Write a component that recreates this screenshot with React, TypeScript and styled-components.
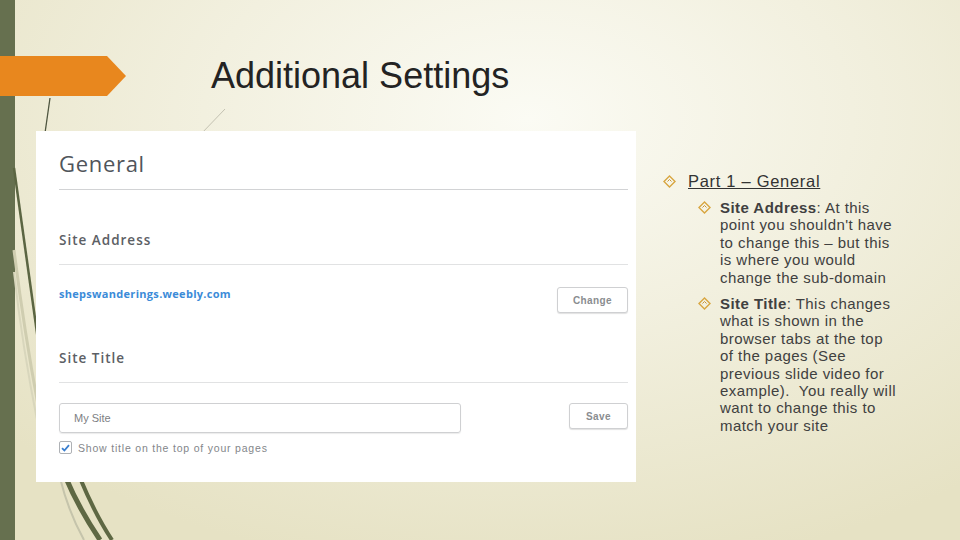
import React from "react";
import styled, { createGlobalStyle } from "styled-components";

const GlobalStyle = createGlobalStyle`
  html, body {
    margin: 0;
    padding: 0;
    background: #e6e2c3;
  }
`;

// Slide frame: green stripe on the left, cream radial wash behind
const Slide = styled.div`
  position: relative;
  width: 960px;
  height: 540px;
  overflow: hidden;
  box-sizing: border-box;
  padding-top: 56px;
  background:
    linear-gradient(to right, #66704f 0, #66704f 15px, transparent 15px),
    radial-gradient(ellipse 75% 85% at 55% 22%, #fbfbf4 0%, #f2f0df 45%, #e6e2c4 100%);
  font-family: "Liberation Sans", Arial, sans-serif;
`;

const Decor = styled.svg`
  position: absolute;
  inset: 0;
  z-index: 0;
  pointer-events: none;
`;

const Header = styled.div`
  position: relative;
  z-index: 1;
  display: flex;
  align-items: center;
  height: 40px;
`;

const Banner = styled.div`
  width: 126px;
  height: 40px;
  background: #e8871e;
  clip-path: polygon(0 0, 107px 0, 126px 50%, 107px 100%, 0 100%);
`;

const Title = styled.h1`
  margin: 0 0 0 85px;
  font-family: "Liberation Sans", Arial, sans-serif;
  font-weight: 400;
  font-size: 36px;
  line-height: 40px;
  color: #232323;
`;

const Content = styled.div`
  position: relative;
  z-index: 1;
  display: flex;
  align-items: flex-start;
  margin-top: 35px;
  padding-left: 36px;
`;

// Screenshot of the settings form
const Panel = styled.div`
  width: 600px;
  height: 351px;
  box-sizing: border-box;
  background: #ffffff;
  padding: 19px 8px 0 23px;
  font-family: "Open Sans", Lato, sans-serif;
`;

const PanelHeading = styled.div`
  font-size: 22px;
  line-height: 27px;
  color: #50555b;
  letter-spacing: 0.7px;
  padding-bottom: 12px;
  border-bottom: 1px solid #d2d3d5;
`;

const SectionLabel = styled.div<{ $gap: number }>`
  margin-top: ${(p) => p.$gap}px;
  font-size: 13.5px;
  line-height: 16px;
  font-weight: 600;
  color: #5c6065;
  letter-spacing: 1px;
  padding-bottom: 16px;
  border-bottom: 1px solid #e1e2e3;
`;

const Row = styled.div<{ $gap: number }>`
  display: flex;
  align-items: flex-start;
  justify-content: space-between;
  margin-top: ${(p) => p.$gap}px;
`;

const Link = styled.span`
  font-size: 11px;
  line-height: 14px;
  font-weight: 700;
  color: #3b8bd8;
  letter-spacing: 0.3px;
`;

const Button = styled.button<{ $width: number }>`
  width: ${(p) => p.$width}px;
  height: 26px;
  box-sizing: border-box;
  border: 1px solid #cfd0d2;
  border-radius: 3px;
  background: #ffffff;
  box-shadow: 0 1px 1px rgba(0, 0, 0, 0.12);
  font-family: "Liberation Sans", Arial, sans-serif;
  font-size: 10px;
  font-weight: 700;
  color: #8a8d90;
  letter-spacing: 0.4px;
  padding: 0;
`;

const TextInput = styled.div`
  width: 402px;
  height: 30px;
  box-sizing: border-box;
  border: 1px solid #cfd0d2;
  border-radius: 3px;
  box-shadow: 0 1px 1px rgba(0, 0, 0, 0.08);
  padding-left: 14px;
  display: flex;
  align-items: center;
  font-family: "Liberation Sans", Arial, sans-serif;
  font-size: 11px;
  color: #7d8083;
`;

const CheckRow = styled.label`
  display: flex;
  align-items: center;
  gap: 6px;
  margin-top: 8px;
  font-family: "Liberation Sans", Arial, sans-serif;
  font-size: 10.5px;
  color: #83868a;
  letter-spacing: 0.8px;
`;

const CheckBox = styled.span`
  width: 13px;
  height: 13px;
  box-sizing: border-box;
  border: 1px solid #aeb1b5;
  border-radius: 2px;
  display: flex;
  align-items: center;
  justify-content: center;
`;

// Bullet notes on the right
const Notes = styled.ul`
  list-style: none;
  margin: 0;
  padding: 40px 0 0 27px;
  color: #3d3d3d;
`;

const Item = styled.li`
  display: flex;
  align-items: flex-start;
  gap: 12px;
`;

const Bullet = styled.span<{ $top: number }>`
  flex: none;
  margin-top: ${(p) => p.$top}px;
  width: 13px;
  height: 13px;
  display: flex;
`;

const Heading = styled.span`
  font-size: 16.5px;
  line-height: 20px;
  letter-spacing: 0.7px;
  text-decoration: underline;
  color: #333333;
`;

const SubList = styled.ul`
  list-style: none;
  margin: 8px 0 0 10px;
  padding: 0;
  display: flex;
  flex-direction: column;
  gap: 9px;
`;

const SubItem = styled.li`
  display: flex;
  align-items: flex-start;
  gap: 9px;
`;

const SubText = styled.span`
  white-space: nowrap;
  font-size: 15px;
  line-height: 17.4px;
  color: #404040;
  letter-spacing: 0.45px;
`;

const Diamond = () => (
  <svg width="13" height="13" viewBox="0 0 13 13">
    <path d="M6.5 1 L12 6.5 L6.5 12 L1 6.5 Z" fill="none" stroke="#d8a640" strokeWidth="1.4" />
    <path d="M4.5 6.5 L6.5 4.5 L8.5 6.5" fill="none" stroke="#c99537" strokeWidth="1" />
  </svg>
);

const siteAddressLines = [
  "point you shouldn't have",
  "to change this – but this",
  "is where you would",
  "change the sub-domain",
];

const siteTitleLines = [
  "what is shown in the",
  "browser tabs at the top",
  "of the pages (See",
  "previous slide video for",
  "example).\u00a0 You really will",
  "want to change this to",
  "match your site",
];

export default function App() {
  return (
    <Slide>
      <GlobalStyle />
      <Decor width="960" height="540" viewBox="0 0 960 540">
        <line x1="50" y1="98" x2="44" y2="140" stroke="#4f5640" strokeWidth="1.3" />
        <line x1="225" y1="109" x2="201" y2="134" stroke="#c4c2b2" strokeWidth="1" />
        <path d="M14 168 L 38 340" fill="none" stroke="#5b6542" strokeWidth="2.5" />
        <path d="M14 250 Q 24 330 38 405" fill="none" stroke="#cfcdb0" strokeWidth="3" />
        <path d="M14 272 Q 22 345 38 425" fill="none" stroke="#d8d6bc" strokeWidth="2" />
        <path d="M66 478 C 76 502, 88 522, 100 540" fill="none" stroke="#5e6843" strokeWidth="5" />
        <path d="M80 478 C 90 502, 100 522, 112 540" fill="none" stroke="#5e6843" strokeWidth="4" />
        <path d="M60 478 C 66 502, 74 522, 84 540" fill="none" stroke="#c5c4ab" strokeWidth="2" />
      </Decor>

      <Header>
        <Banner />
        <Title>Additional Settings</Title>
      </Header>

      <Content>
        <Panel>
          <PanelHeading>General</PanelHeading>

          <SectionLabel $gap={42}>Site Address</SectionLabel>
          <Row $gap={22}>
            <Link>shepswanderings.weebly.com</Link>
            <Button $width={71}>Change</Button>
          </Row>

          <SectionLabel $gap={37}>Site Title</SectionLabel>
          <Row $gap={20}>
            <TextInput>My Site</TextInput>
            <Button $width={59}>Save</Button>
          </Row>

          <CheckRow>
            <CheckBox>
              <svg width="9" height="8" viewBox="0 0 9 8">
                <path d="M1 4.2 L3.4 6.5 L8 1.2" fill="none" stroke="#3a7fcf" strokeWidth="1.8" />
              </svg>
            </CheckBox>
            Show title on the top of your pages
          </CheckRow>
        </Panel>

        <Notes>
          <Item>
            <Bullet $top={4}>
              <Diamond />
            </Bullet>
            <div>
              <Heading>Part 1 – General</Heading>
              <SubList>
                <SubItem>
                  <Bullet $top={2}>
                    <Diamond />
                  </Bullet>
                  <SubText>
                    <b>Site Address</b>: At this
                    {siteAddressLines.map((line) => (
                      <React.Fragment key={line}>
                        <br />
                        {line}
                      </React.Fragment>
                    ))}
                  </SubText>
                </SubItem>
                <SubItem>
                  <Bullet $top={2}>
                    <Diamond />
                  </Bullet>
                  <SubText>
                    <b>Site Title</b>: This changes
                    {siteTitleLines.map((line) => (
                      <React.Fragment key={line}>
                        <br />
                        {line}
                      </React.Fragment>
                    ))}
                  </SubText>
                </SubItem>
              </SubList>
            </div>
          </Item>
        </Notes>
      </Content>
    </Slide>
  );
}
